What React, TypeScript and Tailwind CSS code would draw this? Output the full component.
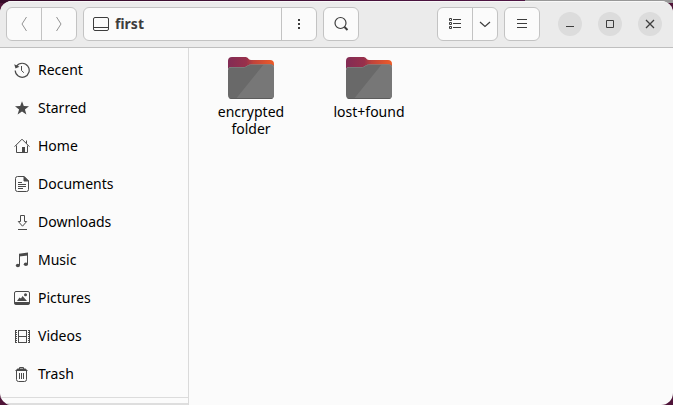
import type { ReactNode } from "react";

interface IconProps {
  size?: number;
  className?: string;
  children: ReactNode;
}

const Icon = ({ size = 16, className = "", children }: IconProps) => (
  <svg
    width={size}
    height={size}
    viewBox={`0 0 ${size} ${size}`}
    fill="none"
    stroke="currentColor"
    className={`shrink-0 ${className}`}
    aria-hidden="true"
  >
    {children}
  </svg>
);

const places: { label: string; icon: ReactNode }[] = [
  {
    label: "Recent",
    icon: (
      <>
        <path d="M2.500 4.200A7 7 0 1 1 1.200 8.500" strokeWidth="1.200" />
        <path d="M.2 2.200l1.300 4.300 4-1.800z" fill="currentColor" stroke="none" />
        <path d="M7.500 4v4.500l2.300 2.200" />
      </>
    ),
  },
  {
    label: "Starred",
    icon: (
      <path
        d="M8 1.200l1.800 4.900 5.200.1-4.100 3.200 1.500 5L8 11.500l-4.400 2.900 1.500-5L1 6.200l5.200-.1z"
        fill="currentColor"
        stroke="none"
      />
    ),
  },
  {
    label: "Home",
    icon: (
      <>
        <path d="M.6 8.600L8 1.200l7.400 7.400M12.500 2.500v3" />
        <path d="M2.500 7.500v7h11v-7" />
        <path d="M8 9h3v5.500H8z" fill="currentColor" stroke="none" />
      </>
    ),
  },
  {
    label: "Documents",
    icon: (
      <>
        <path d="M3.500.5H10L14.500 5v8.500a2 2 0 0 1-2 2h-9a2 2 0 0 1-2-2v-11a2 2 0 0 1 2-2z" />
        <path d="M10 .5V5h4.500z" fill="currentColor" />
        <path d="M4 6.500h4M4 8.500h8M4 10.500h8M4 12.500h5" />
      </>
    ),
  },
  {
    label: "Downloads",
    icon: (
      <>
        <path d="M6.500 1.500h4v6h2.200l-4.200 4.700-4.200-4.700h2.200z" />
        <path d="M4 15.500h9" />
      </>
    ),
  },
  {
    label: "Music",
    icon: (
      <>
        <path d="M5 1.700L14 .5v3L5 4.500z" fill="currentColor" stroke="none" />
        <path d="M5.500 3v10M13.500 2v10" />
        <ellipse cx="3.900" cy="13.500" rx="2.100" ry="1.800" fill="currentColor" stroke="none" />
        <ellipse cx="11.900" cy="12.300" rx="2.100" ry="1.800" fill="currentColor" stroke="none" />
      </>
    ),
  },
  {
    label: "Pictures",
    icon: (
      <>
        <rect x=".5" y="1.500" width="15" height="12" rx="1.500" />
        <path d="M.5 12.500h15v.8a1.200 1.200 0 0 1-1.200 1.200H1.700a1.200 1.200 0 0 1-1.200-1.200z" fill="currentColor" />
        <path d="M3 11l2.500-3.500L7 8.500 8.500 6 13 11z" fill="currentColor" stroke="none" />
        <circle cx="11.500" cy="4.800" r="1.500" fill="currentColor" stroke="none" />
      </>
    ),
  },
  {
    label: "Videos",
    icon: (
      <>
        <path d="M4 2.500h9M4 8.500h9M4 14.500h9M4.500 2v13M12.500 2v13" />
        <path d="M2 2v13M15 2v13" strokeWidth="2" strokeDasharray="1 1" />
        <path d="M1.500 2v13M15.500 2v13" />
      </>
    ),
  },
  {
    label: "Trash",
    icon: (
      <>
        <path d="M5.500 3V1.500h4V3" />
        <path d="M3.500 2.500h8L14 5H1z" fill="currentColor" stroke="none" />
        <path d="M2.500 5v8.500a2 2 0 0 0 2 2h6a2 2 0 0 0 2-2V5" />
        <path d="M5.500 7v6M7.500 7v6M9.500 7v6" />
      </>
    ),
  },
];

const folders = ["encrypted folder", "lost+found"];

const FolderIcon = ({ id }: { id: string }) => (
  <svg width="48" height="47" viewBox="0 0 48 47" aria-hidden="true">
    <defs>
      <linearGradient id={`${id}-back`} x1="0" x2="1" y1="0" y2="0">
        <stop offset="0" stopColor="#822c55" />
        <stop offset=".4" stopColor="#98304b" />
        <stop offset=".55" stopColor="#bf433c" />
        <stop offset="1" stopColor="#ee5c28" />
      </linearGradient>
      <clipPath id={`${id}-front`}>
        <path d="M1 14a3 3 0 0 1 3-3h13c3 0 3.500-2.500 6.500-2.500H44a3 3 0 0 1 3 3V39a4 4 0 0 1-4 4H5a4 4 0 0 1-4-4z" />
      </clipPath>
    </defs>
    <path
      d="M1 5a4 4 0 0 1 4-4h13.500c3 0 2.500 3 5.500 3h19a4 4 0 0 1 4 4v8H1z"
      fill={`url(#${id}-back)`}
    />
    <g clipPath={`url(#${id}-front)`}>
      <path d="M0 0h48v44H0z" fill="#696969" />
      <path d="M37 8h11v36H8z" fill="#777" />
      <path d="M0 42.500h48" stroke="#5c5c5c" />
      <path d="M1 14a3 3 0 0 1 3-3h13c3 0 3.500-2.500 6.500-2.500H44a3 3 0 0 1 3 3" fill="none" stroke="#8c8c8c" />
    </g>
  </svg>
);

const group = "flex h-[34px] overflow-hidden rounded-md border border-[#c3c3c3] bg-[#fbfbfb]";
const button = "flex items-center justify-center";
const circle = "flex size-6 items-center justify-center rounded-full bg-[#dcdcdc]";

const HeaderBar = () => (
  <header className="flex h-[47px] shrink-0 items-center border-b border-[#bfbfbf] bg-[#ebebeb] pr-[11px] pl-1.5 text-[#3d3d3d] shadow-[inset_0_1px_0_#f8f8f8]">
    <div className={`${group} text-[#929292]`}>
      <button type="button" aria-label="Back" className={`${button} w-[35px] border-r border-[#c3c3c3]`}>
        <Icon>
          <path d="M10.500 1L6 8l4.500 7" />
        </Icon>
      </button>
      <button type="button" aria-label="Forward" className={`${button} w-[34px]`}>
        <Icon>
          <path d="M5.500 1L10 8l-4.500 7" />
        </Icon>
      </button>
    </div>

    <div className={`${group} ml-1.5 max-w-[234px] flex-1`}>
      <button type="button" className="flex flex-1 items-center gap-1.5 pl-[9px] text-sm font-bold">
        <Icon>
          <rect x=".5" y="1.500" width="15" height="13" rx="1.500" />
          <path d="M1 11.500h14" />
        </Icon>
        first
      </button>
      <button type="button" aria-label="Folder menu" className={`${button} w-[35px] border-l border-[#c3c3c3]`}>
        <Icon>
          <path d="M7 3h2v2H7zM7 7h2v2H7zM7 11h2v2H7z" fill="currentColor" stroke="none" />
        </Icon>
      </button>
    </div>

    <div className={`${group} ml-1.5`}>
      <button type="button" aria-label="Search" className={`${button} w-[34px]`}>
        <Icon>
          <circle cx="7.500" cy="7" r="5.500" strokeWidth="1.200" />
          <path d="M11.500 11l3 3" strokeWidth="2" />
        </Icon>
      </button>
    </div>

    <div className={`${group} ml-auto`}>
      <button type="button" aria-label="List view" className={`${button} w-[35px] border-r border-[#c3c3c3]`}>
        <Icon>
          <path d="M2.500 2.500h2v2h-2zM2.500 6.500h2v2h-2zM2.500 10.500h2v2h-2zM6 3.500h8M6 7.500h8M6 11.500h8" />
        </Icon>
      </button>
      <button type="button" aria-label="View options" className={`${button} w-6`}>
        <Icon>
          <path d="M3 6l5 4.500L13 6" strokeWidth="1.200" />
        </Icon>
      </button>
    </div>

    <div className={`${group} ml-1.5`}>
      <button type="button" aria-label="Main menu" className={`${button} w-[34px]`}>
        <Icon>
          <path d="M3 3.500h10M3 7.500h10M3 11.500h10" />
        </Icon>
      </button>
    </div>

    <div className="ml-[18px] flex gap-4">
      <button type="button" aria-label="Minimize" className={circle}>
        <Icon>
          <path d="M4 10.500h8" />
        </Icon>
      </button>
      <button type="button" aria-label="Maximize" className={circle}>
        <Icon>
          <path d="M4.500 4.500h7v7h-7z" />
        </Icon>
      </button>
      <button type="button" aria-label="Close" className={circle}>
        <Icon>
          <path d="M4 4l8 8M12 4l-8 8" strokeWidth="1.300" />
        </Icon>
      </button>
    </div>
  </header>
);

const Sidebar = () => (
  <nav aria-label="Places" className="flex w-[189px] shrink-0 flex-col border-r border-[#dadada] pt-[3px]">
    <ul>
      {places.map(({ label, icon }) => (
        <li key={label}>
          <button type="button" className="flex h-[38px] w-full items-center gap-2 pl-3.5 text-left">
            <Icon className="text-[#4a4a4a]">{icon}</Icon>
            {label}
          </button>
        </li>
      ))}
    </ul>
    <hr className="mt-1 border-[#dcdcdc]" />
    <div className="mt-auto h-0.5 shrink-0 bg-[#dedede]" />
  </nav>
);

const App = () => {
  return (
    <div className="flex h-screen flex-col bg-[#4f1438] bg-linear-to-r from-[#360a28] from-0% via-[#4f1544] via-78% to-[#989898] to-78% bg-[length:100%_3px] bg-no-repeat pt-px font-['Noto_Sans','Open_Sans',sans-serif] text-sm text-black">
      <div className="flex min-h-0 flex-1 flex-col overflow-hidden rounded-xl bg-[#fbfbfb]">
        <HeaderBar />
        <div className="flex min-h-0 flex-1">
          <Sidebar />
          <main className="flex flex-1 flex-wrap content-start pt-2 pl-[3px]">
            {folders.map((name, i) => (
              <button key={name} type="button" className="flex w-[118px] flex-col items-center self-start">
                <FolderIcon id={`folder-${i}`} />
                <span className="w-20 text-center leading-[17px]">{name}</span>
              </button>
            ))}
          </main>
        </div>
      </div>
    </div>
  );
};

export default App;
